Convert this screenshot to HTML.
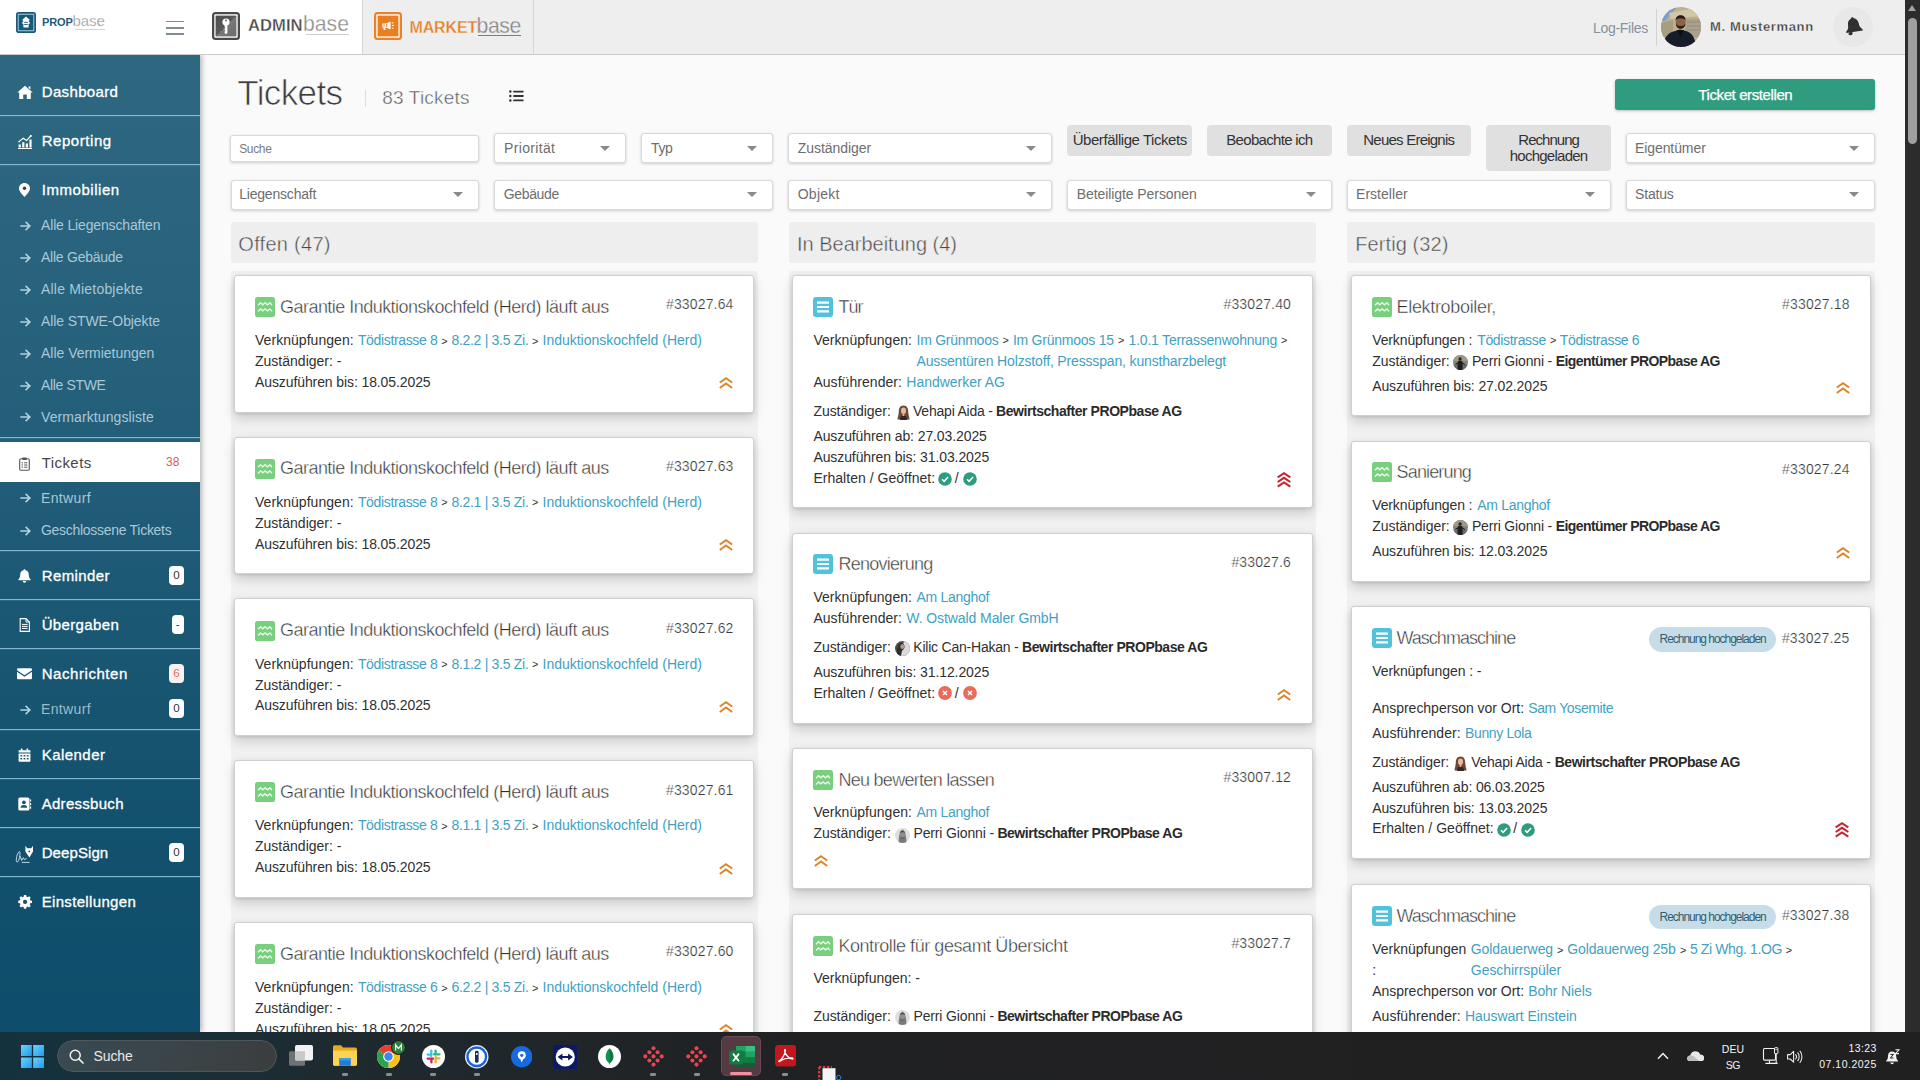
<!DOCTYPE html>
<html lang="de">
<head>
<meta charset="utf-8">
<title>Tickets</title>
<style>
*{box-sizing:border-box;margin:0;padding:0}
html,body{width:1920px;height:1080px;overflow:hidden;background:#fafafa;font-family:"Liberation Sans",sans-serif;color:#333}
body{position:relative}
.abs{position:absolute}
/* ---------- top bar ---------- */
#top{position:absolute;left:0;top:0;width:1905px;height:55px;background:#eeeeee;border-bottom:1px solid #c9c9c9;z-index:5}
#top .white{position:absolute;left:0;top:0;width:362px;height:54px;background:#fff}
#top .tabm{position:absolute;left:362px;top:0;width:172px;height:54px;background:#eeeeee;border-left:1px solid #d6d6d6;border-right:1px solid #d6d6d6}
.logo-t{position:absolute;white-space:nowrap;line-height:1}
/* ---------- sidebar ---------- */
#side{position:absolute;left:0;top:55px;width:200px;height:977px;background:linear-gradient(180deg,#2e6780 0%,#25607b 35%,#15536f 70%,#0e4d6b 100%);z-index:4;box-shadow:2px 0 5px rgba(0,0,0,.28)}
#side .sep{position:absolute;left:0;width:200px;height:1px;background:#82b6ce;box-shadow:0 .5px 0 rgba(130,182,206,.35)}
#side .it{position:absolute;left:41px;color:#fff;font-size:16px;font-weight:700;white-space:nowrap;line-height:20px;letter-spacing:-.35px;-webkit-text-stroke:.0px}
#side .sub{position:absolute;left:41px;color:#a9c8d6;font-size:14px;white-space:nowrap;line-height:18px;letter-spacing:-.25px}
#side .ar{position:absolute;left:19px;width:11px;height:10px}
#side .ic{position:absolute}
#side .bd{position:absolute;left:169px;width:15px;height:19px;background:#fff;border-radius:4px;color:#3c3c3c;font-size:11.5px;line-height:19px;text-align:center;font-weight:400}
#side .act{position:absolute;left:0;top:387px;width:200px;height:40px;background:#fff}
/* ---------- main ---------- */
#main{position:absolute;left:200px;top:55px;width:1705px;height:977px;background:#fafafa;overflow:hidden}
.t{position:absolute;white-space:nowrap;font-size:14px;line-height:21px;color:#303030}
.t b{font-weight:700;color:#2b2b2b}
.lk{color:#41a1c2}
.av{display:inline-block;position:relative;vertical-align:baseline}
.av svg{position:absolute;left:0;top:0}
.inp{position:absolute;background:#fff;border:1px solid #d9d9d9;border-radius:3px;box-shadow:0 1px 3px rgba(0,0,0,.18)}
.arr{position:absolute;width:0;height:0;border-left:5px solid transparent;border-right:5px solid transparent;border-top:5px solid #8a8a8a}
.fb{position:absolute;background:#e0e0e0;border-radius:4px}
.colh{position:absolute;background:#eeeeee;border-radius:3px}
.colb{position:absolute;background:#f1f1f1;border-radius:2px}
.card{position:absolute;background:#fff;border:1px solid #d0d0d0;border-radius:3px;box-shadow:0 5px 12px rgba(0,0,0,.17),0 1px 3px rgba(0,0,0,.10)}
</style>
</head>
<body>
<!-- TOP BAR -->
<div id="top">
  <div class="white"></div>
  <div class="tabm"></div>
  <!-- PROPbase logo -->
  <svg class="abs" style="left:16px;top:12px" width="20" height="21" viewBox="0 0 20 21">
    <rect x="0" y="0" width="20" height="21" rx="2.8" fill="#1f5676"/>
    <rect x="1.7" y="1.7" width="16.6" height="17.6" rx="1.2" fill="#9fd0ea"/>
    <rect x="2.7" y="2.7" width="14.6" height="15.6" rx=".6" fill="#185878"/>
    <path d="M10 4.6 L5.8 8.2 H7.2 V9.8 H6.4 V12 H7.4 V15.4 H12.6 V12 H13.6 V9.8 H12.8 V8.2 H14.2 Z" fill="#fff"/>
    <rect x="8.2" y="9.9" width="3.6" height=".9" fill="#185878"/><rect x="8.2" y="12.1" width="3.6" height=".9" fill="#185878"/>
  </svg>
  <div class="logo-t" style="left:42px;top:17px;font-size:11px;font-weight:700;color:#1f5b7a;letter-spacing:-.15px">PROP</div>
  <div class="logo-t" style="left:72.5px;top:13px;font-size:15px;color:#969696;letter-spacing:-.1px;-webkit-text-stroke:.25px #fff">base</div>
  <div class="abs" style="left:75px;top:29px;width:30px;height:1px;background:#d5d5d5"></div>
  <!-- hamburger -->
  <div class="abs" style="left:166px;top:20.5px;width:18px;height:1.5px;background:#7f8b97"></div>
  <div class="abs" style="left:166px;top:27px;width:18px;height:1.5px;background:#7f8b97"></div>
  <div class="abs" style="left:166px;top:33px;width:18px;height:1.5px;background:#7f8b97"></div>
  <!-- ADMINbase -->
  <svg class="abs" style="left:212px;top:12px" width="28" height="28" viewBox="0 0 28 28">
    <defs><linearGradient id="gk" x1="0" y1="0" x2="1" y2="1"><stop offset="0" stop-color="#4c4c4c"/><stop offset=".5" stop-color="#5a5a5a"/><stop offset=".5" stop-color="#7a7a7a"/><stop offset="1" stop-color="#6a6a6a"/></linearGradient></defs>
    <rect x="0" y="0" width="28" height="28" rx="3.5" fill="#4a4a4a"/>
    <rect x="2.3" y="2.3" width="23.4" height="23.4" rx="1" fill="#fff"/>
    <rect x="3.6" y="3.6" width="20.8" height="20.8" fill="url(#gk)"/>
    <circle cx="14" cy="10" r="3.6" fill="#fff"/><circle cx="14" cy="8.6" r="1" fill="#666"/>
    <path d="M12.6 12.5 H15.4 V21 L14 22.2 L12.6 21 V19.6 L13.6 18.8 L12.6 18 V16.8 L13.6 16 L12.6 15.2 Z" fill="#fff"/>
  </svg>
  <div class="logo-t" style="left:248px;top:18px;font-size:16.6px;font-weight:700;color:#484848;letter-spacing:.05px;-webkit-text-stroke:.3px #fff">ADMIN</div>
  <div class="logo-t" style="left:303px;top:13px;font-size:21.2px;color:#8a8a8a;letter-spacing:0;-webkit-text-stroke:.3px #fff">base</div>
  <div class="abs" style="left:306px;top:34px;width:43px;height:1px;background:#cfcfcf"></div>
  <!-- MARKETbase -->
  <svg class="abs" style="left:374px;top:12px" width="28" height="28" viewBox="0 0 28 28">
    <rect x="0" y="0" width="28" height="28" rx="3.5" fill="#e8832b"/>
    <rect x="2.3" y="2.3" width="23.4" height="23.4" rx="1" fill="#fff"/>
    <rect x="3.6" y="3.6" width="20.8" height="20.8" fill="#ea7f22"/>
    <path d="M8.3 11.6 H12 L16.6 9.4 V17.6 L12 15.4 H11.4 V18 H9.6 V15.4 H8.3 Z" fill="#fff"/>
    <rect x="9.6" y="12.4" width="1" height="2.2" fill="#ea7f22"/><rect x="12.2" y="12" width="1" height="3" fill="#ea7f22"/>
    <rect x="18" y="12.9" width="2" height="1.1" fill="#fff"/><rect x="17.8" y="10.3" width="1.7" height="1" transform="rotate(-30 18.6 10.8)" fill="#fff"/><rect x="17.8" y="15.7" width="1.7" height="1" transform="rotate(30 18.6 16.2)" fill="#fff"/>
  </svg>
  <div class="logo-t" style="left:409.5px;top:20px;font-size:16px;font-weight:700;color:#e67e22;letter-spacing:-.15px;-webkit-text-stroke:.3px #eee">MARKET</div>
  <div class="logo-t" style="left:476.5px;top:15px;font-size:21.2px;color:#858585;letter-spacing:-.4px;-webkit-text-stroke:.3px #eee">base</div>
  <div class="abs" style="left:478px;top:35px;width:43px;height:1px;background:#7d7d7d"></div>
  <!-- right -->
  <div class="logo-t" style="left:1593px;top:21px;font-size:14px;color:#8592a0;letter-spacing:-.3px">Log-Files</div>
  <div class="abs" style="left:1656px;top:9px;width:1px;height:37px;background:#d2d2d2"></div>
  <svg class="abs" style="left:1661px;top:7px" width="40" height="40" viewBox="0 0 40 40">
    <defs><clipPath id="cpa"><circle cx="20" cy="20" r="20"/></clipPath></defs>
    <g clip-path="url(#cpa)">
      <rect width="40" height="40" fill="#bdb08f"/>
      <path d="M0 0 H16 L4 14 H0 Z" fill="#7f9fc9"/>
      <path d="M8 6 L40 0 V9 L10 12 Z" fill="#d2c6a6"/>
      <path d="M24 12 H40 V30 H24 Z" fill="#a9a18c"/>
      <path d="M0 16 L12 13 V30 H0 Z" fill="#a99d80"/>
      <path d="M26 15 H40 M26 19 H40 M26 23 H40" stroke="#8f8873" stroke-width=".8"/>
      <path d="M2 40 C3 29 8 25.5 14 24 L19 22.5 L25 24 C31 26 34 30 35 40 Z" fill="#171c2b"/>
      <path d="M16 23 L19.5 30 L23 23 Z" fill="#0c0f18"/>
      <ellipse cx="19.6" cy="15.2" rx="4.9" ry="6.4" fill="#8b6247"/>
      <path d="M14.6 13.6 C14.2 6.6 25 6.6 24.6 13.6 C23.4 10.6 15.8 10.6 14.6 13.6 Z" fill="#241a14"/>
      <path d="M14.9 16.4 C15 23.4 24.2 23.4 24.4 16.4 C23 20 16.2 20 14.9 16.4 Z" fill="#2c1f18"/>
    </g>
  </svg>
  <div class="logo-t" style="left:1710px;top:20px;font-size:13px;line-height:13px;font-weight:700;color:#363636;-webkit-text-stroke:.3px #eee;letter-spacing:0.650px">M. Mustermann</div>
  <div class="abs" style="left:1833px;top:7px;width:40px;height:40px;border-radius:20px;background:#e8e8e9"></div>
  <svg class="abs" style="left:1843px;top:15px" width="21" height="22" viewBox="0 0 21 22">
    <g fill="#303032"><path transform="rotate(-9 10.5 10)" d="M10.3 2.1 C11.1 2.1 11.7 2.7 11.8 3.4 C14.4 4.2 15.9 6.5 15.9 9.2 C15.9 12.4 16.9 14.1 18.8 15.5 V16.9 H2.2 V15.5 C4.1 14.1 5.1 12.4 5.1 9.2 C5.1 6.5 6.5 4.2 8.9 3.4 C9 2.7 9.5 2.1 10.3 2.1 Z"/><ellipse cx="7.6" cy="18.6" rx="2.1" ry="1.7" transform="rotate(-9 7.6 18.6)"/></g>
  </svg>
</div>
<!-- SIDEBAR -->
<div id="side">
<div class="sep" style="top:60px"></div>
<div class="sep" style="top:109px"></div>
<div class="sep" style="top:382px"></div>
<div class="sep" style="top:495px"></div>
<div class="sep" style="top:544px"></div>
<div class="sep" style="top:593px"></div>
<div class="sep" style="top:674px"></div>
<div class="sep" style="top:723px"></div>
<div class="sep" style="top:772px"></div>
<div class="sep" style="top:821px"></div>
<div class="act" style="top:387.0px;height:39.5px"></div>
<div class="it" style="left:41.7px;top:27px;font-size:15px;letter-spacing:0.357px;-webkit-text-stroke:.32px #fff;font-weight:400;">Dashboard</div>
<svg class="ic" style="left:17px;top:29.5px" width="16" height="14" viewBox="0 0 16 14"><path d="M8 0.8 L0.3 7.6 H2.2 V14 H6.2 V9.6 H9.8 V14 H13.8 V7.6 H15.7 Z M11.6 1.6 H13.4 V4.4 L11.6 2.9 Z" fill="#fff"/></svg>
<div class="it" style="left:41.7px;top:76px;font-size:15px;letter-spacing:0.550px;-webkit-text-stroke:.32px #fff;font-weight:400;">Reporting</div>
<svg class="ic" style="left:17.8px;top:80.0px" width="14" height="14" viewBox="0 0 14 14"><path d="M0 13 H14 V14 H0 Z M0.6 9.6 H2.8 V12.4 H0.6 Z M4.2 7.2 H6.4 V12.4 H4.2 Z M7.8 8.6 H10 V12.4 H7.8 Z M11.4 4.6 H13.6 V12.4 H11.4 Z" fill="#fff"/><path d="M1 6.6 L5.2 3.2 L8.6 5.4 L12.8 0.8" fill="none" stroke="#fff" stroke-width="1.2"/><circle cx="12.8" cy="0.9" r="1" fill="#fff"/><circle cx="1.2" cy="6.6" r=".9" fill="#fff"/></svg>
<div class="it" style="left:41.7px;top:125px;font-size:15px;letter-spacing:0.547px;-webkit-text-stroke:.32px #fff;font-weight:400;">Immobilien</div>
<svg class="ic" style="left:19.2px;top:128.0px" width="11" height="14" viewBox="0 0 11 14"><path d="M5.5 0 C8.6 0 11 2.3 11 5.3 C11 8.6 7.6 11.6 5.5 14 C3.4 11.6 0 8.6 0 5.3 C0 2.3 2.4 0 5.5 0 Z" fill="#fff"/><circle cx="5.5" cy="5.2" r="1.7" fill="#4a3a3a"/></svg>
<svg class="ar" style="left:20.4px;top:165.9px" viewBox="0 0 11 10"><path d="M0.3 5 H9.6 M5.6 0.9 L9.9 5 L5.6 9.1" fill="none" stroke="#b4d2df" stroke-width="1.55"/></svg>
<div class="sub" style="top:161px;letter-spacing:-0.152px;">Alle Liegenschaften</div>
<svg class="ar" style="left:20.4px;top:197.8px" viewBox="0 0 11 10"><path d="M0.3 5 H9.6 M5.6 0.9 L9.9 5 L5.6 9.1" fill="none" stroke="#b4d2df" stroke-width="1.55"/></svg>
<div class="sub" style="top:193px;letter-spacing:-0.245px;">Alle Gebäude</div>
<svg class="ar" style="left:20.4px;top:229.7px" viewBox="0 0 11 10"><path d="M0.3 5 H9.6 M5.6 0.9 L9.9 5 L5.6 9.1" fill="none" stroke="#b4d2df" stroke-width="1.55"/></svg>
<div class="sub" style="top:225px;letter-spacing:0.192px;">Alle Mietobjekte</div>
<svg class="ar" style="left:20.4px;top:261.6px" viewBox="0 0 11 10"><path d="M0.3 5 H9.6 M5.6 0.9 L9.9 5 L5.6 9.1" fill="none" stroke="#b4d2df" stroke-width="1.55"/></svg>
<div class="sub" style="top:257px;letter-spacing:-0.099px;">Alle STWE-Objekte</div>
<svg class="ar" style="left:20.4px;top:293.6px" viewBox="0 0 11 10"><path d="M0.3 5 H9.6 M5.6 0.9 L9.9 5 L5.6 9.1" fill="none" stroke="#b4d2df" stroke-width="1.55"/></svg>
<div class="sub" style="top:289px;letter-spacing:-0.019px;">Alle Vermietungen</div>
<svg class="ar" style="left:20.4px;top:325.5px" viewBox="0 0 11 10"><path d="M0.3 5 H9.6 M5.6 0.9 L9.9 5 L5.6 9.1" fill="none" stroke="#b4d2df" stroke-width="1.55"/></svg>
<div class="sub" style="top:321px;letter-spacing:-0.353px;">Alle STWE</div>
<svg class="ar" style="left:20.4px;top:357.4px" viewBox="0 0 11 10"><path d="M0.3 5 H9.6 M5.6 0.9 L9.9 5 L5.6 9.1" fill="none" stroke="#b4d2df" stroke-width="1.55"/></svg>
<div class="sub" style="top:353px;letter-spacing:0.102px;">Vermarktungsliste</div>
<div class="it" style="left:41.7px;top:398px;font-size:15px;letter-spacing:0.435px;color:#454545;font-weight:400;">Tickets</div>
<svg class="ic" style="left:18.6px;top:401.6px" width="11" height="14" viewBox="0 0 11 14"><rect x="0.7" y="1.8" width="9.6" height="11.5" rx="1.4" fill="none" stroke="#555" stroke-width="1.1"/><rect x="3.2" y="0.4" width="4.6" height="2.6" rx=".8" fill="#555"/><path d="M2.6 5.8 H4 M5.2 5.8 H8.4 M2.6 8 H4 M5.2 8 H8.4 M2.6 10.2 H4 M5.2 10.2 H8.4" stroke="#555" stroke-width="1"/></svg>
<div class="abs" style="left:166px;top:400px;font-size:12px;color:#d9604f;line-height:14px;letter-spacing:.2px">38</div>
<svg class="ar" style="left:20.4px;top:438.4px" viewBox="0 0 11 10"><path d="M0.3 5 H9.6 M5.6 0.9 L9.9 5 L5.6 9.1" fill="none" stroke="#b4d2df" stroke-width="1.55"/></svg>
<div class="sub" style="top:434px;letter-spacing:0.362px;">Entwurf</div>
<svg class="ar" style="left:20.4px;top:470.7px" viewBox="0 0 11 10"><path d="M0.3 5 H9.6 M5.6 0.9 L9.9 5 L5.6 9.1" fill="none" stroke="#b4d2df" stroke-width="1.55"/></svg>
<div class="sub" style="top:466px;letter-spacing:-0.288px;">Geschlossene Tickets</div>
<div class="it" style="left:41.7px;top:511px;font-size:15px;letter-spacing:0.384px;-webkit-text-stroke:.32px #fff;font-weight:400;">Reminder</div>
<svg class="ic" style="left:18px;top:513.5px" width="13" height="14" viewBox="0 0 13 14"><path d="M6.5 0.3 C7.1 0.3 7.5 0.7 7.5 1.3 C9.7 1.8 10.8 3.6 10.8 5.8 C10.8 8.2 11.5 9.4 12.6 10.4 V11.3 H0.4 V10.4 C1.5 9.4 2.2 8.2 2.2 5.8 C2.2 3.6 3.3 1.8 5.5 1.3 C5.5 0.7 5.9 0.3 6.5 0.3 Z M4.8 12.1 H8.2 C8.2 13.1 7.5 13.8 6.5 13.8 C5.5 13.8 4.8 13.1 4.8 12.1 Z" fill="#fff"/></svg>
<div class="bd" style="top:510.5px;left:169px;width:15px;color:#333;background:#fff">0</div>
<div class="it" style="left:41.7px;top:560px;font-size:15px;letter-spacing:0.352px;-webkit-text-stroke:.32px #fff;font-weight:400;">Übergaben</div>
<svg class="ic" style="left:18.6px;top:562.5px" width="11.5" height="14" viewBox="0 0 11.5 14"><path d="M1.2 0.6 H7 L10.4 4 V13.4 H1.2 Z" fill="none" stroke="#fff" stroke-width="1.1"/><path d="M7 0.6 V4 H10.4" fill="none" stroke="#fff" stroke-width="1"/><path d="M3 6.4 H8.6 M3 8.4 H8.6 M3 10.4 H8.6" stroke="#fff" stroke-width="1"/></svg>
<div class="bd" style="top:559.5px;left:171.5px;width:12.5px;color:#333;background:#fff">-</div>
<div class="it" style="left:41.7px;top:609px;font-size:15px;letter-spacing:0.559px;-webkit-text-stroke:.32px #fff;font-weight:400;">Nachrichten</div>
<svg class="ic" style="left:17.2px;top:613.0px" width="15" height="11.5" viewBox="0 0 15 11.5"><path d="M0 1.6 C0 0.9 0.6 0.3 1.3 0.3 H13.7 C14.4 0.3 15 0.9 15 1.6 V2.2 L7.5 7.2 L0 2.2 Z M0 3.8 L7.5 8.8 L15 3.8 V9.9 C15 10.6 14.4 11.2 13.7 11.2 H1.3 C0.6 11.2 0 10.6 0 9.9 Z" fill="#fff"/></svg>
<div class="bd" style="top:608.5px;left:169px;width:15px;color:#d9705f;background:#fdf1ef">6</div>
<svg class="ar" style="left:20.4px;top:649.7px" viewBox="0 0 11 10"><path d="M0.3 5 H9.6 M5.6 0.9 L9.9 5 L5.6 9.1" fill="none" stroke="#b4d2df" stroke-width="1.55"/></svg>
<div class="sub" style="top:645px;letter-spacing:0.362px;color:#9dbccb;">Entwurf</div>
<div class="bd" style="top:644.0px;left:169px;width:15px;color:#333;background:#fff">0</div>
<div class="it" style="left:41.7px;top:690px;font-size:15px;letter-spacing:0.456px;-webkit-text-stroke:.32px #fff;font-weight:400;">Kalender</div>
<svg class="ic" style="left:18.2px;top:692.5px" width="13" height="14" viewBox="0 0 13 14"><path d="M0.6 2.2 H12.4 V4.6 H0.6 Z M0.6 5.4 H12.4 V13 C12.4 13.5 12 13.8 11.6 13.8 H1.4 C1 13.8 0.6 13.5 0.6 13 Z" fill="#fff"/><rect x="2.8" y="0.4" width="1.7" height="3" rx=".5" fill="#fff"/><rect x="8.5" y="0.4" width="1.7" height="3" rx=".5" fill="#fff"/><path d="M2.4 7 H4.2 V8.6 H2.4 Z M5.6 7 H7.4 V8.6 H5.6 Z M8.8 7 H10.6 V8.6 H8.8 Z M2.4 10 H4.2 V11.6 H2.4 Z M5.6 10 H7.4 V11.6 H5.6 Z M8.8 10 H10.6 V11.6 H8.8 Z" fill="#1e5a76"/></svg>
<div class="it" style="left:41.7px;top:739px;font-size:15px;letter-spacing:0.288px;-webkit-text-stroke:.32px #fff;font-weight:400;">Adressbuch</div>
<svg class="ic" style="left:18.2px;top:741.5px" width="13.5" height="14" viewBox="0 0 13.5 14"><rect x="0.3" y="0.5" width="11.2" height="13" rx="1.6" fill="#fff"/><circle cx="5.9" cy="5.3" r="1.9" fill="#1b5673"/><path d="M2.6 10.8 C2.6 8.6 4 7.9 5.9 7.9 C7.8 7.9 9.2 8.6 9.2 10.8 Z" fill="#1b5673"/><path d="M12.6 2.4 V4.6 M12.6 6 V8.2 M12.6 9.6 V11.8" stroke="#fff" stroke-width="1.1"/></svg>
<div class="it" style="left:41.7px;top:788px;font-size:15px;letter-spacing:0.089px;-webkit-text-stroke:.32px #fff;font-weight:400;">DeepSign</div>
<svg class="ic" style="left:15px;top:790.0px" width="19" height="18" viewBox="0 0 19 18"><path d="M1.3 15.8 C1.1 12 3 7 4.3 6.6 C5.6 6.3 5 12 3.7 15.4 C3 17.3 1.5 17.6 1.3 15.8 M5.2 11.2 L6.7 15.4 L8.4 12.7 L9.4 14.7 L11.6 13.3" fill="none" stroke="#cfe6f1" stroke-width=".95" stroke-linejoin="round"/><path d="M6.8 17.4 H14.6" stroke="#cfe6f1" stroke-width=".9"/><path d="M10.4 0.8 L12.2 3.3 H16.2 L18 0.8 V6.5 L14.4 12.5 L10.4 6.5 Z" fill="#fff"/><circle cx="14.3" cy="6.4" r=".85" fill="#3a2a2a"/></svg>
<div class="bd" style="top:787.5px;left:169px;width:15px;color:#333;background:#fff">0</div>
<div class="it" style="left:41.7px;top:837px;font-size:15px;letter-spacing:0.333px;-webkit-text-stroke:.32px #fff;font-weight:400;">Einstellungen</div>
<svg class="ic" style="left:17.8px;top:839.6px" width="14" height="14" viewBox="0 0 14 14"><path d="M5.7 0 H8.3 L8.7 2 L9.9 2.5 L11.6 1.4 L13.4 3.2 L12.3 4.9 L12.8 6.1 L14.8 6.5 V9.1 L12.8 9.5 L12.3 10.7 L13.4 12.4 L11.6 14.2 L9.9 13.1 L8.7 13.6 L8.3 15.6 H5.7 L5.3 13.6 L4.1 13.1 L2.4 14.2 L0.6 12.4 L1.7 10.7 L1.2 9.5 L-0.8 9.1 V6.5 L1.2 6.1 L1.7 4.9 L0.6 3.2 L2.4 1.4 L4.1 2.5 L5.3 2 Z" fill="#fff" transform="translate(0.9,0) scale(.88)"/><circle cx="7.05" cy="6.9" r="2.1" fill="#145270"/></svg>
</div>
<!-- MAIN -->
<div id="main">
<div class="t thin" style="left:37.2px;top:18px;font-size:35px;line-height:40px;letter-spacing:-0.607px;color:#3d3d3d;-webkit-text-stroke:.7px #fafafa;">Tickets</div>
<div class="abs" style="left:165px;top:35px;width:1px;height:17px;background:#dedede"></div>
<div class="t thin" style="left:182.2px;top:31px;font-size:19px;line-height:24px;letter-spacing:0.186px;color:#555;-webkit-text-stroke:.45px #fafafa;">83 Tickets</div>
<svg class="abs" style="left:309px;top:35.3px" width="15" height="12" viewBox="0 0 15 12"><g fill="#333"><circle cx="1.3" cy="1.6" r="1.25"/><circle cx="1.3" cy="6" r="1.25"/><circle cx="1.3" cy="10.4" r="1.25"/><rect x="4.2" y=".7" width="10.4" height="1.8" rx=".4"/><rect x="4.2" y="5.1" width="10.4" height="1.8" rx=".4"/><rect x="4.2" y="9.5" width="10.4" height="1.8" rx=".4"/></g></svg>
<div class="abs" style="left:1415px;top:24px;width:260px;height:31px;border-radius:3px;background:#2f9c7f;box-shadow:0 1px 3px rgba(0,0,0,.25)"></div>
<div class="t" style="left:1498.3px;top:30px;font-size:15px;line-height:20px;letter-spacing:-0.395px;color:#fff;font-weight:400;-webkit-text-stroke:.25px #fff;">Ticket erstellen</div>
<div class="inp" style="left:30.2px;top:79.7px;width:249.1px;height:27.2px"></div>
<div class="t" style="left:39.2px;top:84px;font-size:12px;line-height:20px;letter-spacing:-0.346px;color:#7a7a7a;">Suche</div>
<div class="inp" style="left:294.2px;top:78.3px;width:131.6px;height:30.2px"></div>
<div class="t" style="left:304.0px;top:83px;line-height:20px;letter-spacing:0.340px;color:#6e6e6e;">Priorität</div>
<div class="arr" style="left:400.0px;top:91.2px"></div>
<div class="inp" style="left:441.2px;top:78.3px;width:131.6px;height:30.2px"></div>
<div class="t" style="left:451.0px;top:83px;line-height:20px;letter-spacing:-0.354px;color:#6e6e6e;">Typ</div>
<div class="arr" style="left:546.7px;top:91.2px"></div>
<div class="inp" style="left:588.2px;top:78.3px;width:263.6px;height:30.2px"></div>
<div class="t" style="left:597.7px;top:83px;line-height:20px;letter-spacing:-0.039px;color:#6e6e6e;">Zuständiger</div>
<div class="arr" style="left:825.7px;top:91.2px"></div>
<div class="inp" style="left:1426.2px;top:78.3px;width:248.6px;height:30.2px"></div>
<div class="t" style="left:1435.0px;top:83px;line-height:20px;letter-spacing:-0.089px;color:#6e6e6e;">Eigentümer</div>
<div class="arr" style="left:1648.7px;top:91.2px"></div>
<div class="inp" style="left:30.6px;top:124.5px;width:248.3px;height:30.2px"></div>
<div class="t" style="left:39.2px;top:129px;line-height:20px;letter-spacing:-0.199px;color:#6e6e6e;">Liegenschaft</div>
<div class="arr" style="left:252.7px;top:137.4px"></div>
<div class="inp" style="left:294.2px;top:124.5px;width:278.6px;height:30.2px"></div>
<div class="t" style="left:303.8px;top:129px;line-height:20px;letter-spacing:-0.372px;color:#6e6e6e;">Gebäude</div>
<div class="arr" style="left:546.7px;top:137.4px"></div>
<div class="inp" style="left:588.2px;top:124.5px;width:263.6px;height:30.2px"></div>
<div class="t" style="left:597.7px;top:129px;line-height:20px;letter-spacing:0.257px;color:#6e6e6e;">Objekt</div>
<div class="arr" style="left:825.7px;top:137.4px"></div>
<div class="inp" style="left:866.9px;top:124.5px;width:265.2px;height:30.2px"></div>
<div class="t" style="left:876.7px;top:129px;line-height:20px;letter-spacing:-0.074px;color:#6e6e6e;">Beteiligte Personen</div>
<div class="arr" style="left:1106.0px;top:137.4px"></div>
<div class="inp" style="left:1146.6px;top:124.5px;width:264.5px;height:30.2px"></div>
<div class="t" style="left:1156.0px;top:129px;line-height:20px;letter-spacing:0.039px;color:#6e6e6e;">Ersteller</div>
<div class="arr" style="left:1385.0px;top:137.4px"></div>
<div class="inp" style="left:1426.2px;top:124.5px;width:248.6px;height:30.2px"></div>
<div class="t" style="left:1435.0px;top:129px;line-height:20px;letter-spacing:-0.165px;color:#6e6e6e;">Status</div>
<div class="arr" style="left:1648.7px;top:137.4px"></div>
<div class="fb" style="left:867.3px;top:70.2px;width:124.4px;height:30.7px"></div>
<div class="t" style="left:872.7px;top:76px;font-size:15px;line-height:18px;letter-spacing:-0.445px;color:#333;">Überfällige Tickets</div>
<div class="fb" style="left:1007.3px;top:70.2px;width:124.4px;height:30.7px"></div>
<div class="t" style="left:1026.3px;top:76px;font-size:15px;line-height:18px;letter-spacing:-0.683px;color:#333;">Beobachte ich</div>
<div class="fb" style="left:1147.0px;top:70.2px;width:123.7px;height:30.7px"></div>
<div class="t" style="left:1163.3px;top:76px;font-size:15px;line-height:18px;letter-spacing:-0.773px;color:#333;">Neues Ereignis</div>
<div class="fb" style="left:1286.0px;top:70.2px;width:124.7px;height:45.7px"></div>
<div class="t" style="left:1318.3px;top:76px;font-size:15px;line-height:18px;letter-spacing:-0.962px;color:#333;">Rechnung</div>
<div class="t" style="left:1309.7px;top:92px;font-size:15px;line-height:18px;letter-spacing:-0.739px;color:#333;">hochgeladen</div>
<div class="colh" style="left:30.5px;top:167.3px;width:527.0px;height:40.3px"></div>
<div class="colb" style="left:30.5px;top:216.0px;width:527.0px;height:780px"></div>
<div class="t thin" style="left:38.3px;top:176px;font-size:20px;line-height:26px;letter-spacing:0.280px;color:#484848;-webkit-text-stroke:.45px #eee;">Offen (47)</div>
<div class="colh" style="left:588.5px;top:167.3px;width:527.5px;height:40.3px"></div>
<div class="colb" style="left:588.5px;top:216.0px;width:527.5px;height:780px"></div>
<div class="t thin" style="left:597.0px;top:176px;font-size:20px;line-height:26px;letter-spacing:-0.007px;color:#484848;-webkit-text-stroke:.45px #eee;">In Bearbeitung (4)</div>
<div class="colh" style="left:1147.0px;top:167.3px;width:528.0px;height:40.3px"></div>
<div class="colb" style="left:1147.0px;top:216.0px;width:528.0px;height:780px"></div>
<div class="t thin" style="left:1155.3px;top:176px;font-size:20px;line-height:26px;letter-spacing:0.085px;color:#484848;-webkit-text-stroke:.45px #eee;">Fertig (32)</div>
<div class="card" style="left:34px;top:220px;width:520px;height:138px"></div>
<svg class="abs" style="left:55.0px;top:242.0px" width="20" height="20" viewBox="0 0 20 20"><rect width="20" height="20" rx="2.6" fill="#79cf7d"/><path d="M3 8.2 L5.5 5.7 L7.8 7.7 L10.1 5.7 L12.5 7.7 L15 5.7 L17 8.2 M3 14.4 L5.5 11.9 L7.8 13.9 L10.1 11.9 L12.5 13.9 L15 11.9 L17 14.4" fill="none" stroke="#e6f9e7" stroke-width="1.45" stroke-linejoin="miter"/></svg>
<div class="t thin" style="left:80.0px;top:240px;font-size:18px;line-height:24px;letter-spacing:-0.532px;color:#2e2e2e;-webkit-text-stroke:.42px #fff;">Garantie Induktionskochfeld (Herd) läuft aus</div>
<div class="t thin" style="left:466.0px;top:239px;line-height:20px;letter-spacing:0.147px;color:#383838;-webkit-text-stroke:.22px #fff;">#33027.64</div>
<div class="t" style="left:55.0px;top:275px;letter-spacing:0.044px;">Verknüpfungen:</div>
<div class="t" style="left:157.9px;top:275px;letter-spacing:-0.349px;"><span class="lk">Tödistrasse 8</span></div>
<div class="t" style="left:241.3px;top:276px;font-size:10.8px;">&gt;</div>
<div class="t" style="left:251.4px;top:275px;letter-spacing:-0.290px;"><span class="lk">8.2.2 | 3.5 Zi.</span></div>
<div class="t" style="left:332.0px;top:276px;font-size:10.8px;">&gt;</div>
<div class="t" style="left:342.5px;top:275px;letter-spacing:-0.005px;"><span class="lk">Induktionskochfeld (Herd)</span></div>
<div class="t" style="left:55.0px;top:296px;letter-spacing:0.009px;">Zuständiger: -</div>
<div class="t" style="left:55.0px;top:317px;letter-spacing:-0.101px;">Auszuführen bis: 18.05.2025</div>
<svg class="abs" style="left:518.7px;top:322.2px" width="14" height="12" viewBox="0 0 14 12"><path d="M0.8 5.6 L7 1.2 L13.2 5.6 M0.8 10.9 L7 6.5 L13.2 10.9" fill="none" stroke="#dd8429" stroke-width="1.9" stroke-linejoin="miter"/></svg>
<div class="card" style="left:34px;top:382px;width:520px;height:137px"></div>
<svg class="abs" style="left:55.0px;top:403.8px" width="20" height="20" viewBox="0 0 20 20"><rect width="20" height="20" rx="2.6" fill="#79cf7d"/><path d="M3 8.2 L5.5 5.7 L7.8 7.7 L10.1 5.7 L12.5 7.7 L15 5.7 L17 8.2 M3 14.4 L5.5 11.9 L7.8 13.9 L10.1 11.9 L12.5 13.9 L15 11.9 L17 14.4" fill="none" stroke="#e6f9e7" stroke-width="1.45" stroke-linejoin="miter"/></svg>
<div class="t thin" style="left:80.0px;top:401px;font-size:18px;line-height:24px;letter-spacing:-0.532px;color:#2e2e2e;-webkit-text-stroke:.42px #fff;">Garantie Induktionskochfeld (Herd) läuft aus</div>
<div class="t thin" style="left:466.0px;top:401px;line-height:20px;letter-spacing:0.147px;color:#383838;-webkit-text-stroke:.22px #fff;">#33027.63</div>
<div class="t" style="left:55.0px;top:437px;letter-spacing:0.044px;">Verknüpfungen:</div>
<div class="t" style="left:157.9px;top:437px;letter-spacing:-0.349px;"><span class="lk">Tödistrasse 8</span></div>
<div class="t" style="left:241.3px;top:437px;font-size:10.8px;">&gt;</div>
<div class="t" style="left:251.4px;top:437px;letter-spacing:-0.290px;"><span class="lk">8.2.1 | 3.5 Zi.</span></div>
<div class="t" style="left:332.0px;top:437px;font-size:10.8px;">&gt;</div>
<div class="t" style="left:342.5px;top:437px;letter-spacing:-0.005px;"><span class="lk">Induktionskochfeld (Herd)</span></div>
<div class="t" style="left:55.0px;top:458px;letter-spacing:0.009px;">Zuständiger: -</div>
<div class="t" style="left:55.0px;top:479px;letter-spacing:-0.101px;">Auszuführen bis: 18.05.2025</div>
<svg class="abs" style="left:518.7px;top:484.0px" width="14" height="12" viewBox="0 0 14 12"><path d="M0.8 5.6 L7 1.2 L13.2 5.6 M0.8 10.9 L7 6.5 L13.2 10.9" fill="none" stroke="#dd8429" stroke-width="1.9" stroke-linejoin="miter"/></svg>
<div class="card" style="left:34px;top:543px;width:520px;height:138px"></div>
<svg class="abs" style="left:55.0px;top:565.5px" width="20" height="20" viewBox="0 0 20 20"><rect width="20" height="20" rx="2.6" fill="#79cf7d"/><path d="M3 8.2 L5.5 5.7 L7.8 7.7 L10.1 5.7 L12.5 7.7 L15 5.7 L17 8.2 M3 14.4 L5.5 11.9 L7.8 13.9 L10.1 11.9 L12.5 13.9 L15 11.9 L17 14.4" fill="none" stroke="#e6f9e7" stroke-width="1.45" stroke-linejoin="miter"/></svg>
<div class="t thin" style="left:80.0px;top:563px;font-size:18px;line-height:24px;letter-spacing:-0.532px;color:#2e2e2e;-webkit-text-stroke:.42px #fff;">Garantie Induktionskochfeld (Herd) läuft aus</div>
<div class="t thin" style="left:466.0px;top:563px;line-height:20px;letter-spacing:0.147px;color:#383838;-webkit-text-stroke:.22px #fff;">#33027.62</div>
<div class="t" style="left:55.0px;top:599px;letter-spacing:0.044px;">Verknüpfungen:</div>
<div class="t" style="left:157.9px;top:599px;letter-spacing:-0.349px;"><span class="lk">Tödistrasse 8</span></div>
<div class="t" style="left:241.3px;top:599px;font-size:10.8px;">&gt;</div>
<div class="t" style="left:251.4px;top:599px;letter-spacing:-0.290px;"><span class="lk">8.1.2 | 3.5 Zi.</span></div>
<div class="t" style="left:332.0px;top:599px;font-size:10.8px;">&gt;</div>
<div class="t" style="left:342.5px;top:599px;letter-spacing:-0.005px;"><span class="lk">Induktionskochfeld (Herd)</span></div>
<div class="t" style="left:55.0px;top:620px;letter-spacing:0.009px;">Zuständiger: -</div>
<div class="t" style="left:55.0px;top:640px;letter-spacing:-0.101px;">Auszuführen bis: 18.05.2025</div>
<svg class="abs" style="left:518.7px;top:645.7px" width="14" height="12" viewBox="0 0 14 12"><path d="M0.8 5.6 L7 1.2 L13.2 5.6 M0.8 10.9 L7 6.5 L13.2 10.9" fill="none" stroke="#dd8429" stroke-width="1.9" stroke-linejoin="miter"/></svg>
<div class="card" style="left:34px;top:705px;width:520px;height:138px"></div>
<svg class="abs" style="left:55.0px;top:727.2px" width="20" height="20" viewBox="0 0 20 20"><rect width="20" height="20" rx="2.6" fill="#79cf7d"/><path d="M3 8.2 L5.5 5.7 L7.8 7.7 L10.1 5.7 L12.5 7.7 L15 5.7 L17 8.2 M3 14.4 L5.5 11.9 L7.8 13.9 L10.1 11.9 L12.5 13.9 L15 11.9 L17 14.4" fill="none" stroke="#e6f9e7" stroke-width="1.45" stroke-linejoin="miter"/></svg>
<div class="t thin" style="left:80.0px;top:725px;font-size:18px;line-height:24px;letter-spacing:-0.532px;color:#2e2e2e;-webkit-text-stroke:.42px #fff;">Garantie Induktionskochfeld (Herd) läuft aus</div>
<div class="t thin" style="left:466.0px;top:725px;line-height:20px;letter-spacing:0.147px;color:#383838;-webkit-text-stroke:.22px #fff;">#33027.61</div>
<div class="t" style="left:55.0px;top:760px;letter-spacing:0.044px;">Verknüpfungen:</div>
<div class="t" style="left:157.9px;top:760px;letter-spacing:-0.349px;"><span class="lk">Tödistrasse 8</span></div>
<div class="t" style="left:241.3px;top:761px;font-size:10.8px;">&gt;</div>
<div class="t" style="left:251.4px;top:760px;letter-spacing:-0.290px;"><span class="lk">8.1.1 | 3.5 Zi.</span></div>
<div class="t" style="left:332.0px;top:761px;font-size:10.8px;">&gt;</div>
<div class="t" style="left:342.5px;top:760px;letter-spacing:-0.005px;"><span class="lk">Induktionskochfeld (Herd)</span></div>
<div class="t" style="left:55.0px;top:781px;letter-spacing:0.009px;">Zuständiger: -</div>
<div class="t" style="left:55.0px;top:802px;letter-spacing:-0.101px;">Auszuführen bis: 18.05.2025</div>
<svg class="abs" style="left:518.7px;top:807.5px" width="14" height="12" viewBox="0 0 14 12"><path d="M0.8 5.6 L7 1.2 L13.2 5.6 M0.8 10.9 L7 6.5 L13.2 10.9" fill="none" stroke="#dd8429" stroke-width="1.9" stroke-linejoin="miter"/></svg>
<div class="card" style="left:34px;top:867px;width:520px;height:138px"></div>
<svg class="abs" style="left:55.0px;top:889.0px" width="20" height="20" viewBox="0 0 20 20"><rect width="20" height="20" rx="2.6" fill="#79cf7d"/><path d="M3 8.2 L5.5 5.7 L7.8 7.7 L10.1 5.7 L12.5 7.7 L15 5.7 L17 8.2 M3 14.4 L5.5 11.9 L7.8 13.9 L10.1 11.9 L12.5 13.9 L15 11.9 L17 14.4" fill="none" stroke="#e6f9e7" stroke-width="1.45" stroke-linejoin="miter"/></svg>
<div class="t thin" style="left:80.0px;top:887px;font-size:18px;line-height:24px;letter-spacing:-0.532px;color:#2e2e2e;-webkit-text-stroke:.42px #fff;">Garantie Induktionskochfeld (Herd) läuft aus</div>
<div class="t thin" style="left:466.0px;top:886px;line-height:20px;letter-spacing:0.147px;color:#383838;-webkit-text-stroke:.22px #fff;">#33027.60</div>
<div class="t" style="left:55.0px;top:922px;letter-spacing:0.044px;">Verknüpfungen:</div>
<div class="t" style="left:157.9px;top:922px;letter-spacing:-0.349px;"><span class="lk">Tödistrasse 6</span></div>
<div class="t" style="left:241.3px;top:923px;font-size:10.8px;">&gt;</div>
<div class="t" style="left:251.4px;top:922px;letter-spacing:-0.290px;"><span class="lk">6.2.2 | 3.5 Zi.</span></div>
<div class="t" style="left:332.0px;top:923px;font-size:10.8px;">&gt;</div>
<div class="t" style="left:342.5px;top:922px;letter-spacing:-0.005px;"><span class="lk">Induktionskochfeld (Herd)</span></div>
<div class="t" style="left:55.0px;top:943px;letter-spacing:0.009px;">Zuständiger: -</div>
<div class="t" style="left:55.0px;top:964px;letter-spacing:-0.101px;">Auszuführen bis: 18.05.2025</div>
<svg class="abs" style="left:518.7px;top:969.2px" width="14" height="12" viewBox="0 0 14 12"><path d="M0.8 5.6 L7 1.2 L13.2 5.6 M0.8 10.9 L7 6.5 L13.2 10.9" fill="none" stroke="#dd8429" stroke-width="1.9" stroke-linejoin="miter"/></svg>
<div class="card" style="left:592px;top:220px;width:521px;height:233px"></div>
<svg class="abs" style="left:613.0px;top:242.0px" width="20" height="20" viewBox="0 0 20 20"><rect width="20" height="20" rx="3" fill="#52c2da"/><path d="M4 5.6 H16 M4 10 H16 M4 14.4 H16" stroke="#fff" stroke-width="2.1"/></svg>
<div class="t thin" style="left:638.4px;top:240px;font-size:18px;line-height:24px;letter-spacing:-0.968px;color:#2e2e2e;-webkit-text-stroke:.42px #fff;">Tür</div>
<div class="t thin" style="left:1023.5px;top:239px;line-height:20px;letter-spacing:0.147px;color:#383838;-webkit-text-stroke:.22px #fff;">#33027.40</div>
<div class="t" style="left:613.4px;top:275px;letter-spacing:0.037px;">Verknüpfungen:</div>
<div class="t" style="left:716.5px;top:275px;letter-spacing:-0.264px;"><span class="lk">Im Grünmoos</span></div>
<div class="t" style="left:802.4px;top:275px;font-size:10.8px;">&gt;</div>
<div class="t" style="left:812.9px;top:275px;letter-spacing:-0.240px;"><span class="lk">Im Grünmoos 15</span></div>
<div class="t" style="left:918.1px;top:275px;font-size:10.8px;">&gt;</div>
<div class="t" style="left:928.6px;top:275px;letter-spacing:-0.212px;"><span class="lk">1.0.1 Terrassenwohnung</span></div>
<div class="t" style="left:1081.0px;top:275px;font-size:10.8px;">&gt;</div>
<div class="t" style="left:716.5px;top:296px;letter-spacing:-0.158px;"><span class="lk">Aussentüren Holzstoff, Pressspan, kunstharzbelegt</span></div>
<div class="t" style="left:613.4px;top:317px;letter-spacing:0.050px;">Ausführender:</div>
<div class="t" style="left:706.3px;top:317px;letter-spacing:-0.009px;"><span class="lk">Handwerker AG</span></div>
<div class="t" style="left:613.4px;top:346px;letter-spacing:-0.035px;">Zuständiger:</div>
<div class="t" style="left:713.0px;top:346px;letter-spacing:-0.208px;">Vehapi Aida -</div>
<div class="t" style="left:796.0px;top:346px;letter-spacing:-0.439px;"><b>Bewirtschafter PROPbase AG</b></div>
<div class="abs" style="left:696.6px;top:350.2px;width:13px;height:15px"><svg width="13" height="15" viewBox="0 0 13 15"><path d="M6.5 0.4 C10 0.4 11.2 3.4 11.2 6.4 C11.2 9.4 12.2 11.6 12.6 14.6 H0.4 C0.8 11.6 1.8 9.4 1.8 6.4 C1.8 3.4 3 0.4 6.5 0.4 Z" fill="#6d4a34"/><ellipse cx="6.5" cy="5.8" rx="2.5" ry="3.3" fill="#e7bc9d"/><path d="M3 15 C3 11.2 5 10.2 6.5 10.2 C8 10.2 10 11.2 10 15 Z" fill="#2e2a2c"/><path d="M5.6 9 H7.4 V11 H5.6 Z" fill="#e0b092"/></svg></div>
<div class="t" style="left:613.4px;top:371px;letter-spacing:-0.097px;">Auszuführen ab: 27.03.2025</div>
<div class="t" style="left:613.4px;top:392px;letter-spacing:-0.090px;">Auszuführen bis: 31.03.2025</div>
<div class="t" style="left:613.4px;top:413px;letter-spacing:0.032px;">Erhalten / Geöffnet:</div>
<svg class="abs" style="left:738.0px;top:417.3px" width="14" height="14" viewBox="0 0 14 14"><circle cx="7" cy="7" r="6.8" fill="#2f9c7f"/><path d="M4 7.2 L6.1 9.3 L10.1 5" fill="none" stroke="#fff" stroke-width="1.5"/></svg>
<div class="t" style="left:754.8px;top:413px;">/</div>
<svg class="abs" style="left:763.3px;top:417.3px" width="14" height="14" viewBox="0 0 14 14"><circle cx="7" cy="7" r="6.8" fill="#2f9c7f"/><path d="M4 7.2 L6.1 9.3 L10.1 5" fill="none" stroke="#fff" stroke-width="1.5"/></svg>
<svg class="abs" style="left:1077.4px;top:416.6px" width="14" height="16" viewBox="0 0 14 16"><path d="M0.7 5.4 L7 1.2 L13.3 5.4 M0.7 10 L7 5.8 L13.3 10 M0.7 14.7 L7 10.5 L13.3 14.7" fill="none" stroke="#c8222f" stroke-width="2" stroke-linejoin="miter"/></svg>
<div class="card" style="left:592px;top:478px;width:521px;height:191px"></div>
<svg class="abs" style="left:613.0px;top:499.0px" width="20" height="20" viewBox="0 0 20 20"><rect width="20" height="20" rx="3" fill="#52c2da"/><path d="M4 5.6 H16 M4 10 H16 M4 14.4 H16" stroke="#fff" stroke-width="2.1"/></svg>
<div class="t thin" style="left:638.4px;top:497px;font-size:18px;line-height:24px;letter-spacing:-0.725px;color:#2e2e2e;-webkit-text-stroke:.42px #fff;">Renovierung</div>
<div class="t thin" style="left:1031.4px;top:497px;line-height:20px;letter-spacing:0.146px;color:#383838;-webkit-text-stroke:.22px #fff;">#33027.6</div>
<div class="t" style="left:613.4px;top:532px;letter-spacing:0.037px;">Verknüpfungen:</div>
<div class="t" style="left:716.5px;top:532px;letter-spacing:-0.300px;"><span class="lk">Am Langhof</span></div>
<div class="t" style="left:613.4px;top:553px;letter-spacing:0.050px;">Ausführender:</div>
<div class="t" style="left:706.3px;top:553px;letter-spacing:-0.082px;"><span class="lk">W. Ostwald Maler GmbH</span></div>
<div class="t" style="left:613.4px;top:582px;letter-spacing:-0.035px;">Zuständiger:</div>
<div class="t" style="left:713.3px;top:582px;letter-spacing:-0.219px;">Kilic Can-Hakan -</div>
<div class="t" style="left:822.0px;top:582px;letter-spacing:-0.450px;"><b>Bewirtschafter PROPbase AG</b></div>
<div class="abs" style="left:695.0px;top:585.8px;width:15px;height:15px"><svg width="15" height="15" viewBox="0 0 15 15"><defs><clipPath id="ck"><circle cx="7.5" cy="7.5" r="7.5"/></clipPath></defs><g clip-path="url(#ck)"><rect width="15" height="15" fill="#4a4f47"/><path d="M9 0 L15 0 L15 15 L5 15 Z" fill="#dcd9de"/><path d="M4 3 C6 1 9 2 9.5 5 C9.8 7 8.5 9 7 9.6 L6 15 L2 15 L2 8 Z" fill="#2c2f2a"/><ellipse cx="7.3" cy="5.6" rx="2" ry="2.5" fill="#b89a86"/></g></svg></div>
<div class="t" style="left:613.4px;top:607px;letter-spacing:-0.090px;">Auszuführen bis: 31.12.2025</div>
<div class="t" style="left:613.4px;top:628px;letter-spacing:0.032px;">Erhalten / Geöffnet:</div>
<svg class="abs" style="left:738.0px;top:631.1px" width="14" height="14" viewBox="0 0 14 14"><circle cx="7" cy="7" r="6.9" fill="#e86b5c"/><path d="M5 5 L9 9 M9 5 L5 9" fill="none" stroke="#fff" stroke-width="1.4"/></svg>
<div class="t" style="left:754.8px;top:628px;">/</div>
<svg class="abs" style="left:763.3px;top:631.1px" width="14" height="14" viewBox="0 0 14 14"><circle cx="7" cy="7" r="6.9" fill="#e86b5c"/><path d="M5 5 L9 9 M9 5 L5 9" fill="none" stroke="#fff" stroke-width="1.4"/></svg>
<svg class="abs" style="left:1077.3px;top:633.6px" width="14" height="12" viewBox="0 0 14 12"><path d="M0.8 5.6 L7 1.2 L13.2 5.6 M0.8 10.9 L7 6.5 L13.2 10.9" fill="none" stroke="#dd8429" stroke-width="1.9" stroke-linejoin="miter"/></svg>
<div class="card" style="left:592px;top:693px;width:521px;height:141px"></div>
<svg class="abs" style="left:613.0px;top:714.9px" width="20" height="20" viewBox="0 0 20 20"><rect width="20" height="20" rx="2.6" fill="#79cf7d"/><path d="M3 8.2 L5.5 5.7 L7.8 7.7 L10.1 5.7 L12.5 7.7 L15 5.7 L17 8.2 M3 14.4 L5.5 11.9 L7.8 13.9 L10.1 11.9 L12.5 13.9 L15 11.9 L17 14.4" fill="none" stroke="#e6f9e7" stroke-width="1.45" stroke-linejoin="miter"/></svg>
<div class="t thin" style="left:638.4px;top:713px;font-size:18px;line-height:24px;letter-spacing:-0.711px;color:#2e2e2e;-webkit-text-stroke:.42px #fff;">Neu bewerten lassen</div>
<div class="t thin" style="left:1023.5px;top:712px;line-height:20px;letter-spacing:0.147px;color:#383838;-webkit-text-stroke:.22px #fff;">#33007.12</div>
<div class="t" style="left:613.4px;top:747px;letter-spacing:0.037px;">Verknüpfungen:</div>
<div class="t" style="left:716.5px;top:747px;letter-spacing:-0.300px;"><span class="lk">Am Langhof</span></div>
<div class="t" style="left:613.4px;top:768px;letter-spacing:-0.035px;">Zuständiger:</div>
<div class="t" style="left:713.5px;top:768px;letter-spacing:-0.148px;">Perri Gionni -</div>
<div class="t" style="left:797.4px;top:768px;letter-spacing:-0.466px;"><b>Bewirtschafter PROPbase AG</b></div>
<div class="abs" style="left:695.0px;top:773.0px;width:15px;height:15px"><svg width="15" height="15" viewBox="0 0 15 15"><defs><clipPath id="cp1"><circle cx="7.5" cy="7.5" r="7.5"/></clipPath></defs><g clip-path="url(#cp1)"><rect width="15" height="15" fill="#dedede"/><path d="M3.6 15 C3.6 11 4 3.4 7.5 1.6 C11 3.4 11.4 11 11.4 15 Z" fill="#7a7a7a"/><ellipse cx="7.5" cy="6.6" rx="2.7" ry="3.6" fill="#8f8f8f"/><path d="M4.8 5.2 C4.8 1.8 10.2 1.8 10.2 5.2 C9 3.8 6 3.8 4.8 5.2 Z" fill="#4a4a4a"/><path d="M5.2 8 C5.6 11.6 9.4 11.6 9.8 8 C9 10 6 10 5.2 8 Z" fill="#555"/></g></svg></div>
<svg class="abs" style="left:613.5px;top:799.7px" width="14" height="12" viewBox="0 0 14 12"><path d="M0.8 5.6 L7 1.2 L13.2 5.6 M0.8 10.9 L7 6.5 L13.2 10.9" fill="none" stroke="#dd8429" stroke-width="1.9" stroke-linejoin="miter"/></svg>
<div class="card" style="left:592px;top:859px;width:521px;height:187px"></div>
<svg class="abs" style="left:613.0px;top:881.0px" width="20" height="20" viewBox="0 0 20 20"><rect width="20" height="20" rx="2.6" fill="#79cf7d"/><path d="M3 8.2 L5.5 5.7 L7.8 7.7 L10.1 5.7 L12.5 7.7 L15 5.7 L17 8.2 M3 14.4 L5.5 11.9 L7.8 13.9 L10.1 11.9 L12.5 13.9 L15 11.9 L17 14.4" fill="none" stroke="#e6f9e7" stroke-width="1.45" stroke-linejoin="miter"/></svg>
<div class="t thin" style="left:638.4px;top:879px;font-size:18px;line-height:24px;letter-spacing:-0.434px;color:#2e2e2e;-webkit-text-stroke:.42px #fff;">Kontrolle für gesamt Übersicht</div>
<div class="t thin" style="left:1031.4px;top:878px;line-height:20px;letter-spacing:0.146px;color:#383838;-webkit-text-stroke:.22px #fff;">#33027.7</div>
<div class="t" style="left:613.4px;top:913px;letter-spacing:-0.002px;">Verknüpfungen: -</div>
<div class="t" style="left:613.4px;top:951px;letter-spacing:-0.035px;">Zuständiger:</div>
<div class="t" style="left:713.5px;top:951px;letter-spacing:-0.148px;">Perri Gionni -</div>
<div class="t" style="left:797.4px;top:951px;letter-spacing:-0.466px;"><b>Bewirtschafter PROPbase AG</b></div>
<div class="abs" style="left:695.0px;top:955.3px;width:15px;height:15px"><svg width="15" height="15" viewBox="0 0 15 15"><defs><clipPath id="cp1"><circle cx="7.5" cy="7.5" r="7.5"/></clipPath></defs><g clip-path="url(#cp1)"><rect width="15" height="15" fill="#dedede"/><path d="M3.6 15 C3.6 11 4 3.4 7.5 1.6 C11 3.4 11.4 11 11.4 15 Z" fill="#7a7a7a"/><ellipse cx="7.5" cy="6.6" rx="2.7" ry="3.6" fill="#8f8f8f"/><path d="M4.8 5.2 C4.8 1.8 10.2 1.8 10.2 5.2 C9 3.8 6 3.8 4.8 5.2 Z" fill="#4a4a4a"/><path d="M5.2 8 C5.6 11.6 9.4 11.6 9.8 8 C9 10 6 10 5.2 8 Z" fill="#555"/></g></svg></div>
<div class="card" style="left:1151px;top:220px;width:520px;height:141px"></div>
<svg class="abs" style="left:1172.0px;top:242.2px" width="20" height="20" viewBox="0 0 20 20"><rect width="20" height="20" rx="2.6" fill="#79cf7d"/><path d="M3 8.2 L5.5 5.7 L7.8 7.7 L10.1 5.7 L12.5 7.7 L15 5.7 L17 8.2 M3 14.4 L5.5 11.9 L7.8 13.9 L10.1 11.9 L12.5 13.9 L15 11.9 L17 14.4" fill="none" stroke="#e6f9e7" stroke-width="1.45" stroke-linejoin="miter"/></svg>
<div class="t thin" style="left:1196.6px;top:240px;font-size:18px;line-height:24px;letter-spacing:-0.333px;color:#2e2e2e;-webkit-text-stroke:.42px #fff;">Elektroboiler,</div>
<div class="t thin" style="left:1582.1px;top:239px;line-height:20px;letter-spacing:0.147px;color:#383838;-webkit-text-stroke:.22px #fff;">#33027.18</div>
<div class="t" style="left:1172.2px;top:275px;letter-spacing:-0.118px;">Verknüpfungen :</div>
<div class="t" style="left:1277.2px;top:275px;letter-spacing:-0.332px;"><span class="lk">Tödistrasse</span></div>
<div class="t" style="left:1350.0px;top:275px;font-size:10.8px;">&gt;</div>
<div class="t" style="left:1359.8px;top:275px;letter-spacing:-0.356px;"><span class="lk">Tödistrasse 6</span></div>
<div class="t" style="left:1172.2px;top:296px;letter-spacing:-0.026px;">Zuständiger:</div>
<div class="t" style="left:1271.9px;top:296px;letter-spacing:-0.162px;">Perri Gionni -</div>
<div class="t" style="left:1355.8px;top:296px;letter-spacing:-0.589px;"><b>Eigentümer PROPbase AG</b></div>
<div class="abs" style="left:1253.0px;top:300.0px;width:15px;height:15px"><svg width="15" height="15" viewBox="0 0 15 15"><defs><clipPath id="cp2"><circle cx="7.5" cy="7.5" r="7.5"/></clipPath></defs><g clip-path="url(#cp2)"><rect width="15" height="15" fill="#8a8378"/><rect y="0" width="15" height="6" fill="#a2988a"/><rect y="9.8" width="15" height="5.2" fill="#6d6b6a"/><path d="M4.6 15 V7.6 C4.6 6 6 5.4 7 5.4 C8.2 5.4 9.6 6 9.6 7.6 V15 Z" fill="#1d1f22"/><circle cx="7.1" cy="3.9" r="1.7" fill="#2a2623"/><path d="M2.5 9.4 L4.8 8 M9.4 8 L12 9.6" stroke="#1d1f22" stroke-width="1.1"/></g></svg></div>
<div class="t" style="left:1172.2px;top:321px;letter-spacing:-0.116px;">Auszuführen bis: 27.02.2025</div>
<svg class="abs" style="left:1635.6px;top:326.9px" width="14" height="12" viewBox="0 0 14 12"><path d="M0.8 5.6 L7 1.2 L13.2 5.6 M0.8 10.9 L7 6.5 L13.2 10.9" fill="none" stroke="#dd8429" stroke-width="1.9" stroke-linejoin="miter"/></svg>
<div class="card" style="left:1151px;top:386px;width:520px;height:141px"></div>
<svg class="abs" style="left:1172.0px;top:407.3px" width="20" height="20" viewBox="0 0 20 20"><rect width="20" height="20" rx="2.6" fill="#79cf7d"/><path d="M3 8.2 L5.5 5.7 L7.8 7.7 L10.1 5.7 L12.5 7.7 L15 5.7 L17 8.2 M3 14.4 L5.5 11.9 L7.8 13.9 L10.1 11.9 L12.5 13.9 L15 11.9 L17 14.4" fill="none" stroke="#e6f9e7" stroke-width="1.45" stroke-linejoin="miter"/></svg>
<div class="t thin" style="left:1196.6px;top:405px;font-size:18px;line-height:24px;letter-spacing:-0.853px;color:#2e2e2e;-webkit-text-stroke:.42px #fff;">Sanierung</div>
<div class="t thin" style="left:1582.1px;top:404px;line-height:20px;letter-spacing:0.147px;color:#383838;-webkit-text-stroke:.22px #fff;">#33027.24</div>
<div class="t" style="left:1172.2px;top:440px;letter-spacing:-0.118px;">Verknüpfungen :</div>
<div class="t" style="left:1277.2px;top:440px;letter-spacing:-0.270px;"><span class="lk">Am Langhof</span></div>
<div class="t" style="left:1172.2px;top:461px;letter-spacing:-0.026px;">Zuständiger:</div>
<div class="t" style="left:1271.9px;top:461px;letter-spacing:-0.162px;">Perri Gionni -</div>
<div class="t" style="left:1355.8px;top:461px;letter-spacing:-0.589px;"><b>Eigentümer PROPbase AG</b></div>
<div class="abs" style="left:1253.0px;top:465.0px;width:15px;height:15px"><svg width="15" height="15" viewBox="0 0 15 15"><defs><clipPath id="cp2"><circle cx="7.5" cy="7.5" r="7.5"/></clipPath></defs><g clip-path="url(#cp2)"><rect width="15" height="15" fill="#8a8378"/><rect y="0" width="15" height="6" fill="#a2988a"/><rect y="9.8" width="15" height="5.2" fill="#6d6b6a"/><path d="M4.6 15 V7.6 C4.6 6 6 5.4 7 5.4 C8.2 5.4 9.6 6 9.6 7.6 V15 Z" fill="#1d1f22"/><circle cx="7.1" cy="3.9" r="1.7" fill="#2a2623"/><path d="M2.5 9.4 L4.8 8 M9.4 8 L12 9.6" stroke="#1d1f22" stroke-width="1.1"/></g></svg></div>
<div class="t" style="left:1172.2px;top:486px;letter-spacing:-0.116px;">Auszuführen bis: 12.03.2025</div>
<svg class="abs" style="left:1635.6px;top:491.9px" width="14" height="12" viewBox="0 0 14 12"><path d="M0.8 5.6 L7 1.2 L13.2 5.6 M0.8 10.9 L7 6.5 L13.2 10.9" fill="none" stroke="#dd8429" stroke-width="1.9" stroke-linejoin="miter"/></svg>
<div class="card" style="left:1151px;top:551px;width:520px;height:253px"></div>
<svg class="abs" style="left:1172.0px;top:572.7px" width="20" height="20" viewBox="0 0 20 20"><rect width="20" height="20" rx="3" fill="#52c2da"/><path d="M4 5.6 H16 M4 10 H16 M4 14.4 H16" stroke="#fff" stroke-width="2.1"/></svg>
<div class="t thin" style="left:1196.4px;top:571px;font-size:18px;line-height:24px;letter-spacing:-0.968px;color:#2e2e2e;-webkit-text-stroke:.42px #fff;">Waschmaschine</div>
<div class="abs" style="left:1448.8px;top:572.0px;width:127.0px;height:24.8px;border-radius:13px;background:#c6dde9"></div>
<div class="t" style="left:1459.5px;top:576px;font-size:12px;line-height:16px;letter-spacing:-1.030px;color:#355d70;">Rechnung hochgeladen</div>
<div class="t thin" style="left:1581.9px;top:573px;line-height:20px;letter-spacing:0.147px;color:#383838;-webkit-text-stroke:.22px #fff;">#33027.25</div>
<div class="t" style="left:1172.2px;top:606px;letter-spacing:-0.078px;">Verknüpfungen : -</div>
<div class="t" style="left:1172.2px;top:643px;letter-spacing:-0.027px;">Ansprechperson vor Ort:</div>
<div class="t" style="left:1328.2px;top:643px;letter-spacing:-0.367px;"><span class="lk">Sam Yosemite</span></div>
<div class="t" style="left:1172.2px;top:668px;letter-spacing:0.035px;">Ausführender:</div>
<div class="t" style="left:1265.0px;top:668px;letter-spacing:-0.365px;"><span class="lk">Bunny Lola</span></div>
<div class="t" style="left:1172.2px;top:697px;letter-spacing:-0.068px;">Zuständiger:</div>
<div class="t" style="left:1271.2px;top:697px;letter-spacing:-0.239px;">Vehapi Aida -</div>
<div class="t" style="left:1354.7px;top:697px;letter-spacing:-0.454px;"><b>Bewirtschafter PROPbase AG</b></div>
<div class="abs" style="left:1254.2px;top:700.8px;width:13px;height:15px"><svg width="13" height="15" viewBox="0 0 13 15"><path d="M6.5 0.4 C10 0.4 11.2 3.4 11.2 6.4 C11.2 9.4 12.2 11.6 12.6 14.6 H0.4 C0.8 11.6 1.8 9.4 1.8 6.4 C1.8 3.4 3 0.4 6.5 0.4 Z" fill="#6d4a34"/><ellipse cx="6.5" cy="5.8" rx="2.5" ry="3.3" fill="#e7bc9d"/><path d="M3 15 C3 11.2 5 10.2 6.5 10.2 C8 10.2 10 11.2 10 15 Z" fill="#2e2a2c"/><path d="M5.6 9 H7.4 V11 H5.6 Z" fill="#e0b092"/></svg></div>
<div class="t" style="left:1172.2px;top:722px;letter-spacing:-0.131px;">Auszuführen ab: 06.03.2025</div>
<div class="t" style="left:1172.2px;top:743px;letter-spacing:-0.116px;">Auszuführen bis: 13.03.2025</div>
<div class="t" style="left:1172.2px;top:763px;letter-spacing:0.017px;">Erhalten / Geöffnet:</div>
<svg class="abs" style="left:1296.5px;top:767.7px" width="14" height="14" viewBox="0 0 14 14"><circle cx="7" cy="7" r="6.8" fill="#2f9c7f"/><path d="M4 7.2 L6.1 9.3 L10.1 5" fill="none" stroke="#fff" stroke-width="1.5"/></svg>
<div class="t" style="left:1313.2px;top:763px;">/</div>
<svg class="abs" style="left:1321.2px;top:767.7px" width="14" height="14" viewBox="0 0 14 14"><circle cx="7" cy="7" r="6.8" fill="#2f9c7f"/><path d="M4 7.2 L6.1 9.3 L10.1 5" fill="none" stroke="#fff" stroke-width="1.5"/></svg>
<svg class="abs" style="left:1635.4px;top:767.4px" width="14" height="16" viewBox="0 0 14 16"><path d="M0.7 5.4 L7 1.2 L13.3 5.4 M0.7 10 L7 5.8 L13.3 10 M0.7 14.7 L7 10.5 L13.3 14.7" fill="none" stroke="#c8222f" stroke-width="2" stroke-linejoin="miter"/></svg>
<div class="card" style="left:1151px;top:829px;width:520px;height:217px"></div>
<svg class="abs" style="left:1172.0px;top:850.6px" width="20" height="20" viewBox="0 0 20 20"><rect width="20" height="20" rx="3" fill="#52c2da"/><path d="M4 5.6 H16 M4 10 H16 M4 14.4 H16" stroke="#fff" stroke-width="2.1"/></svg>
<div class="t thin" style="left:1196.4px;top:849px;font-size:18px;line-height:24px;letter-spacing:-0.968px;color:#2e2e2e;-webkit-text-stroke:.42px #fff;">Waschmaschine</div>
<div class="abs" style="left:1448.8px;top:849.8px;width:127.0px;height:24.5px;border-radius:13px;background:#c6dde9"></div>
<div class="t" style="left:1459.5px;top:854px;font-size:12px;line-height:16px;letter-spacing:-1.030px;color:#355d70;">Rechnung hochgeladen</div>
<div class="t thin" style="left:1581.9px;top:850px;line-height:20px;letter-spacing:0.147px;color:#383838;-webkit-text-stroke:.22px #fff;">#33027.38</div>
<div class="t" style="left:1172.2px;top:884px;letter-spacing:-0.007px;">Verknüpfungen</div>
<div class="t" style="left:1270.8px;top:884px;letter-spacing:-0.097px;"><span class="lk">Goldauerweg</span></div>
<div class="t" style="left:1356.9px;top:885px;font-size:10.8px;">&gt;</div>
<div class="t" style="left:1367.3px;top:884px;letter-spacing:-0.148px;"><span class="lk">Goldauerweg 25b</span></div>
<div class="t" style="left:1479.9px;top:885px;font-size:10.8px;">&gt;</div>
<div class="t" style="left:1489.9px;top:884px;letter-spacing:-0.368px;"><span class="lk">5 Zi Whg. 1.OG</span></div>
<div class="t" style="left:1585.8px;top:885px;font-size:10.8px;">&gt;</div>
<div class="t" style="left:1172.2px;top:905px;">:</div>
<div class="t" style="left:1270.8px;top:905px;letter-spacing:-0.045px;"><span class="lk">Geschirrspüler</span></div>
<div class="t" style="left:1172.2px;top:926px;letter-spacing:-0.027px;">Ansprechperson vor Ort:</div>
<div class="t" style="left:1328.2px;top:926px;letter-spacing:-0.108px;"><span class="lk">Bohr Niels</span></div>
<div class="t" style="left:1172.2px;top:951px;letter-spacing:0.035px;">Ausführender:</div>
<div class="t" style="left:1265.0px;top:951px;letter-spacing:-0.066px;"><span class="lk">Hauswart Einstein</span></div>
</div>
<!-- SCROLLBAR -->
<div class="abs" style="left:1905px;top:0;width:15px;height:1032px;background:#2c2c2c;z-index:6">
  <div class="abs" style="left:3px;top:5px;width:0;height:0;border-left:4.5px solid transparent;border-right:4.5px solid transparent;border-bottom:6px solid #a0a0a0"></div>
  <div class="abs" style="left:3px;top:18px;width:9px;height:126px;border-radius:5px;background:#9f9f9f"></div>
</div>
<!-- TASKBAR -->
<div id="task" class="abs" style="left:0;top:1032px;width:1920px;height:48px;background:linear-gradient(90deg,#14323e 0%,#19303a 8%,#1e2a2f 18%,#20262a 28%,#202123 42%,#202020 100%);z-index:9;overflow:hidden">
<svg class="abs" style="left:21px;top:12.5px" width="23" height="23.5" viewBox="0 0 23 23.5"><defs><linearGradient id="wg" x1="0" y1="0" x2="1" y2="1"><stop offset="0" stop-color="#6fd3ff"/><stop offset="1" stop-color="#1e9be8"/></linearGradient></defs><rect x="0" y="0" width="10.8" height="11" fill="url(#wg)"/><rect x="12.2" y="0" width="10.8" height="11" fill="url(#wg)"/><rect x="0" y="12.5" width="10.8" height="11" fill="url(#wg)"/><rect x="12.2" y="12.5" width="10.8" height="11" fill="url(#wg)"/></svg>
<div class="abs" style="left:57px;top:8px;width:220px;height:32px;border-radius:16px;background:linear-gradient(90deg,#384a52,#3c4447 60%,#3b3d3e);border:1px solid #4b585e"></div>
<svg class="abs" style="left:68.5px;top:16.5px" width="15" height="15" viewBox="0 0 15 15"><circle cx="6.2" cy="6.2" r="5" fill="none" stroke="#f0f0f0" stroke-width="1.5"/><path d="M9.8 9.8 L14 14" stroke="#f0f0f0" stroke-width="1.7" stroke-linecap="round"/></svg>
<div class="abs" style="left:93.5px;top:15px;font-size:14px;line-height:18px;color:#e9e9e9;letter-spacing:-.1px">Suche</div>
<svg class="abs" style="left:289px;top:13.0px" width="24" height="21" viewBox="0 0 24 21"><rect x="0" y="6.2" width="16" height="14.6" rx="1.6" fill="#6f7173"/><rect x="6" y="0" width="18" height="15.4" rx="1.8" fill="#f2f2f2"/><rect x="6" y="6.2" width="10" height="9.2" fill="#c9c9c9"/></svg>
<svg class="abs" style="left:333px;top:13.0px" width="24" height="21" viewBox="0 0 24 21"><path d="M0 2 C0 1 .8 .2 1.8 .2 H8 L10 2.4 H22.2 C23.2 2.4 24 3.2 24 4.2 V19 C24 20 23.2 20.8 22.2 20.8 H1.8 C.8 20.8 0 20 0 19 Z" fill="#e8a91c"/><path d="M0 5.4 H24 V19 C24 20 23.2 20.8 22.2 20.8 H1.8 C.8 20.8 0 20 0 19 Z" fill="#fcd354"/><rect x="6.2" y="13.2" width="11.6" height="7.6" fill="#1b7fd6"/><rect x="6.2" y="13.2" width="11.6" height="2.2" fill="#3aa0f2"/></svg>
<svg class="abs" style="left:377px;top:13.0px" width="23" height="23" viewBox="0 0 23 23"><circle cx="11.5" cy="11.5" r="11.5" fill="#fff"/><path d="M11.5 11.5 L1.54 5.75 A11.5 11.5 0 0 1 21.46 5.75 Z" fill="#e3402f"/><path d="M11.5 11.5 L21.46 5.75 A11.5 11.5 0 0 1 11.5 23 Z" fill="#fbc116"/><path d="M11.5 11.5 L11.5 23 A11.5 11.5 0 0 1 1.54 5.75 Z" fill="#2ba24c"/><circle cx="11.5" cy="11.5" r="5.3" fill="#fff"/><circle cx="11.5" cy="11.5" r="4.2" fill="#3f86f0"/></svg>
<svg class="abs" style="left:391px;top:8.0px" width="15" height="15" viewBox="0 0 15 15"><circle cx="7.5" cy="7.5" r="7.5" fill="#202020"/><circle cx="7.5" cy="7.5" r="6.4" fill="#2d7d3a"/><path d="M4.6 10.4 V4.8 L7.5 8.6 L10.4 4.8 V10.4" fill="none" stroke="#fff" stroke-width="1.2"/></svg>
<svg class="abs" style="left:422px;top:13.0px" width="23" height="23" viewBox="0 0 23 23"><circle cx="11.5" cy="11.5" r="11.5" fill="#fff"/><g stroke-width="2.3" stroke-linecap="round" fill="none"><path d="M9.3 5.6 V11" stroke="#36c5f0"/><path d="M5.6 9.6 H9" stroke="#36c5f0"/><path d="M13.7 17.4 V12" stroke="#ecb22e"/><path d="M17.4 13.4 H14" stroke="#ecb22e"/><path d="M17.4 9.3 H12" stroke="#2eb67d"/><path d="M13.6 5.6 V9" stroke="#2eb67d"/><path d="M5.6 13.7 H11" stroke="#e01e5a"/><path d="M9.4 17.4 V14" stroke="#e01e5a"/></g></svg>
<svg class="abs" style="left:465.2px;top:13.0px" width="23.5" height="23.5" viewBox="0 0 23.5 23.5"><circle cx="11.75" cy="11.75" r="11.75" fill="#e9f0fb"/><circle cx="11.75" cy="11.75" r="9.3" fill="#fff" stroke="#1b62d8" stroke-width="2.4"/><rect x="10" y="5.8" width="3.6" height="11.9" rx="1.4" fill="#1c2f55"/><circle cx="11.8" cy="9" r="1" fill="#fff"/></svg>
<svg class="abs" style="left:510.5px;top:14.0px" width="21.5" height="21.5" viewBox="0 0 21.5 21.5"><circle cx="10.75" cy="10.75" r="10.75" fill="#1769e0"/><circle cx="10.75" cy="9.3" r="4" fill="#fff"/><path d="M8.6 11.6 H12.9 L10.75 16.4 Z" fill="#fff"/><circle cx="10.75" cy="9.3" r="1.6" fill="#1769e0"/></svg>
<svg class="abs" style="left:552.5px;top:12.5px" width="24.5" height="24" viewBox="0 0 24.5 24"><rect width="24.5" height="24" rx="1.5" fill="#0c1a66"/><circle cx="12.25" cy="12" r="9.6" fill="#fff"/><path d="M4.6 12 L9.4 8.6 V10.9 H15.1 V8.6 L19.9 12 L15.1 15.4 V13.1 H9.4 V15.4 Z" fill="#0c1a66"/></svg>
<svg class="abs" style="left:597.5px;top:13.0px" width="23" height="23" viewBox="0 0 23 23"><circle cx="11.5" cy="11.5" r="11.5" fill="#fff"/><path d="M11.5 3.2 C14.6 6.4 15.6 9.4 15.3 12.2 C15 15 13.4 16.8 11.9 17.9 L11.6 19.8 H11.2 L10.9 17.9 C9.4 16.8 7.9 15 7.7 12.2 C7.4 9.4 8.4 6.4 11.5 3.2 Z" fill="#12924f"/><path d="M11.5 3.2 C14.6 6.4 15.6 9.4 15.3 12.2 C15 15 13.4 16.8 11.9 17.9 L11.5 12 Z" fill="#0d7a41"/></svg>
<svg class="abs" style="left:642.5px;top:13.5px" width="21" height="21" viewBox="0 0 21 21"><circle cx="10.5" cy="2.2" r="2.05" fill="#f0424b"/><circle cx="6.4" cy="6.3" r="2.05" fill="#f0424b"/><circle cx="14.6" cy="6.3" r="2.05" fill="#f0424b"/><circle cx="2.3" cy="10.4" r="2.05" fill="#f0424b"/><circle cx="10.5" cy="10.4" r="2.05" fill="#f0424b"/><circle cx="18.7" cy="10.4" r="2.05" fill="#f0424b"/><circle cx="6.4" cy="14.5" r="2.05" fill="#f0424b"/><circle cx="14.6" cy="14.5" r="2.05" fill="#f0424b"/><circle cx="10.5" cy="18.6" r="2.05" fill="#f0424b"/></svg>
<svg class="abs" style="left:686.3px;top:13.5px" width="21" height="21" viewBox="0 0 21 21"><circle cx="10.5" cy="2.2" r="2.05" fill="#f0424b"/><circle cx="6.4" cy="6.3" r="2.05" fill="#f0424b"/><circle cx="14.6" cy="6.3" r="2.05" fill="#f0424b"/><circle cx="2.3" cy="10.4" r="2.05" fill="#f0424b"/><circle cx="10.5" cy="10.4" r="2.05" fill="#f0424b"/><circle cx="18.7" cy="10.4" r="2.05" fill="#f0424b"/><circle cx="6.4" cy="14.5" r="2.05" fill="#f0424b"/><circle cx="14.6" cy="14.5" r="2.05" fill="#f0424b"/><circle cx="10.5" cy="18.6" r="2.05" fill="#f0424b"/></svg>
<div class="abs" style="left:721px;top:4px;width:40px;height:40px;border-radius:5px;background:#553a42;border:1px solid #6b4a53"></div>
<svg class="abs" style="left:728.5px;top:13.5px" width="26" height="22.5" viewBox="0 0 26 22.5"><rect x="7" y="0" width="19" height="22.5" rx="1.6" fill="#1f9d57"/><rect x="16.5" y="0" width="9.5" height="5.6" fill="#33c481"/><rect x="7" y="0" width="9.5" height="5.6" fill="#21a366"/><rect x="16.5" y="5.6" width="9.5" height="5.6" fill="#21a366"/><rect x="7" y="5.6" width="9.5" height="5.6" fill="#107c41"/><rect x="7" y="11.2" width="19" height="5.6" fill="#107c41"/><rect x="7" y="16.8" width="19" height="5.7" rx="1.2" fill="#185c37"/><rect x="0" y="4.4" width="14" height="14" rx="1.4" fill="#107c41"/><path d="M4 7.6 L10 15.2 M10 7.6 L4 15.2" stroke="#fff" stroke-width="1.8"/></svg>
<div class="abs" style="left:730px;top:40.3px;width:22px;height:3px;border-radius:1.5px;background:#f48ca2"></div>
<svg class="abs" style="left:774.5px;top:13.0px" width="21.5" height="21.5" viewBox="0 0 21.5 21.5"><rect width="21.5" height="21.5" rx="3.6" fill="#c3171d"/><path d="M4.2 15.8 C6.6 14.8 9.6 10.4 10.4 5.6 C10.7 4 9.4 4 9.6 5.6 C10.2 9.4 13.6 13.4 17 14 C18.4 14.2 18.2 12.8 16.8 12.8 C12.8 12.8 7.6 14.2 4.6 16.4 C3.8 17 3.6 16.1 4.2 15.8 Z" fill="none" stroke="#fff" stroke-width="1.25"/></svg>
<div class="abs" style="left:342.0px;top:41px;width:6px;height:2.6px;border-radius:1.3px;background:#8c8c8c"></div>
<div class="abs" style="left:386.0px;top:41px;width:6px;height:2.6px;border-radius:1.3px;background:#8c8c8c"></div>
<div class="abs" style="left:430.3px;top:41px;width:6px;height:2.6px;border-radius:1.3px;background:#8c8c8c"></div>
<div class="abs" style="left:474.0px;top:41px;width:6px;height:2.6px;border-radius:1.3px;background:#8c8c8c"></div>
<div class="abs" style="left:649.7px;top:41px;width:6px;height:2.6px;border-radius:1.3px;background:#8c8c8c"></div>
<div class="abs" style="left:694.0px;top:41px;width:6px;height:2.6px;border-radius:1.3px;background:#8c8c8c"></div>
<div class="abs" style="left:782.0px;top:41px;width:6px;height:2.6px;border-radius:1.3px;background:#8c8c8c"></div>
<svg class="abs" style="left:818px;top:34.0px" width="24" height="14" viewBox="0 0 24 14"><rect x="4.5" y="2.2" width="13" height="12" fill="#f4f4f4"/><path d="M1 1 H14" stroke="#e33" stroke-width="2.2" stroke-dasharray="2.4 1.6"/><path d="M1.2 1 V14" stroke="#e33" stroke-width="2.2" stroke-dasharray="2.4 1.6"/><circle cx="20.6" cy="11.6" r="2.2" fill="none" stroke="#2a86d8" stroke-width="1"/></svg>
<svg class="abs" style="left:1657px;top:20.0px" width="12" height="8" viewBox="0 0 12 8"><path d="M1 6.8 L6 1.6 L11 6.8" fill="none" stroke="#f2f2f2" stroke-width="1.5"/></svg>
<svg class="abs" style="left:1686.5px;top:18.5px" width="17.5" height="10.8" viewBox="0 0 17.5 10.8"><path d="M4 10.6 C1.6 10.6 0.2 9.2 0.2 7.4 C0.2 5.6 1.6 4.4 3.2 4.4 C3.8 1.8 6 0.2 8.4 0.2 C10.6 0.2 12.4 1.4 13.2 3.4 C15.6 3.4 17.3 5 17.3 7 C17.3 9 15.8 10.6 13.6 10.6 Z" fill="#e8e8e8"/><path d="M3.2 4.4 C5.6 4.2 7.6 5.4 9 7.6 L13.6 10.6 H4 C1.6 10.6 0.2 9.2 0.2 7.4 C0.2 5.6 1.6 4.4 3.2 4.4 Z" fill="#bdbdbd"/></svg>
<div class="abs" style="left:1721.7px;top:10px;font-size:10.5px;line-height:14px;color:#f4f4f4;white-space:nowrap;letter-spacing:0.144px">DEU</div>
<div class="abs" style="left:1725.8px;top:26px;font-size:10.5px;line-height:14px;color:#f4f4f4;white-space:nowrap;letter-spacing:-0.436px">SG</div>
<svg class="abs" style="left:1762px;top:15.0px" width="18" height="18" viewBox="0 0 18 18"><rect x="1.5" y="1.5" width="12" height="11.6" rx="1" fill="none" stroke="#f2f2f2" stroke-width="1.1"/><path d="M7.5 13.4 V16 M3.4 16.4 H15.6" stroke="#f2f2f2" stroke-width="1.1"/><rect x="12.5" y=".7" width="3.4" height="6" rx=".7" fill="#202020" stroke="#f2f2f2" stroke-width="1"/><path d="M13.3 2.6 H15.1" stroke="#f2f2f2" stroke-width=".8"/><path d="M14.2 6.8 V16.4" stroke="#f2f2f2" stroke-width="1.1"/></svg>
<svg class="abs" style="left:1786.5px;top:17.5px" width="17" height="13.5" viewBox="0 0 17 13.5"><path d="M.6 4.6 H3.2 L6.6 1.4 V12.2 L3.2 9 H.6 Z" fill="none" stroke="#f2f2f2" stroke-width="1.05" stroke-linejoin="round"/><path d="M8.6 4.6 C9.6 5.8 9.6 7.8 8.6 9 M10.8 2.9 C12.6 5 12.6 8.6 10.8 10.7 M13 1.2 C15.6 4.2 15.6 9.4 13 12.4" fill="none" stroke="#f2f2f2" stroke-width="1.05" stroke-linecap="round"/></svg>
<div class="abs" style="left:1848.4px;top:9px;font-size:10.5px;line-height:14px;color:#f4f4f4;white-space:nowrap;letter-spacing:0.425px">13:23</div>
<div class="abs" style="left:1819.2px;top:25px;font-size:10.5px;line-height:14px;color:#f4f4f4;white-space:nowrap;letter-spacing:0.505px">07.10.2025</div>
<svg class="abs" style="left:1885.5px;top:16.5px" width="14" height="16" viewBox="0 0 14 16"><path d="M6 2.4 C8.6 2.4 10.2 4.4 10.2 7 C10.2 9.8 10.9 10.8 12 11.8 V12.6 H0.2 V11.8 C1.3 10.8 2 9.8 2 7 C2 4.4 3.4 2.4 6 2.4 Z" fill="#f2f2f2"/><path d="M4.4 13.6 H7.8 C7.8 14.6 7.1 15.3 6.1 15.3 C5.1 15.3 4.4 14.6 4.4 13.6 Z" fill="#f2f2f2"/><path d="M4.4 5.4 H7.4 L4.4 9 H7.4" fill="none" stroke="#202020" stroke-width="1"/><path d="M9.4 .8 H13 L9.4 4.6 H13" fill="none" stroke="#f2f2f2" stroke-width="1.1"/></svg>
</div>
</body>
</html>
